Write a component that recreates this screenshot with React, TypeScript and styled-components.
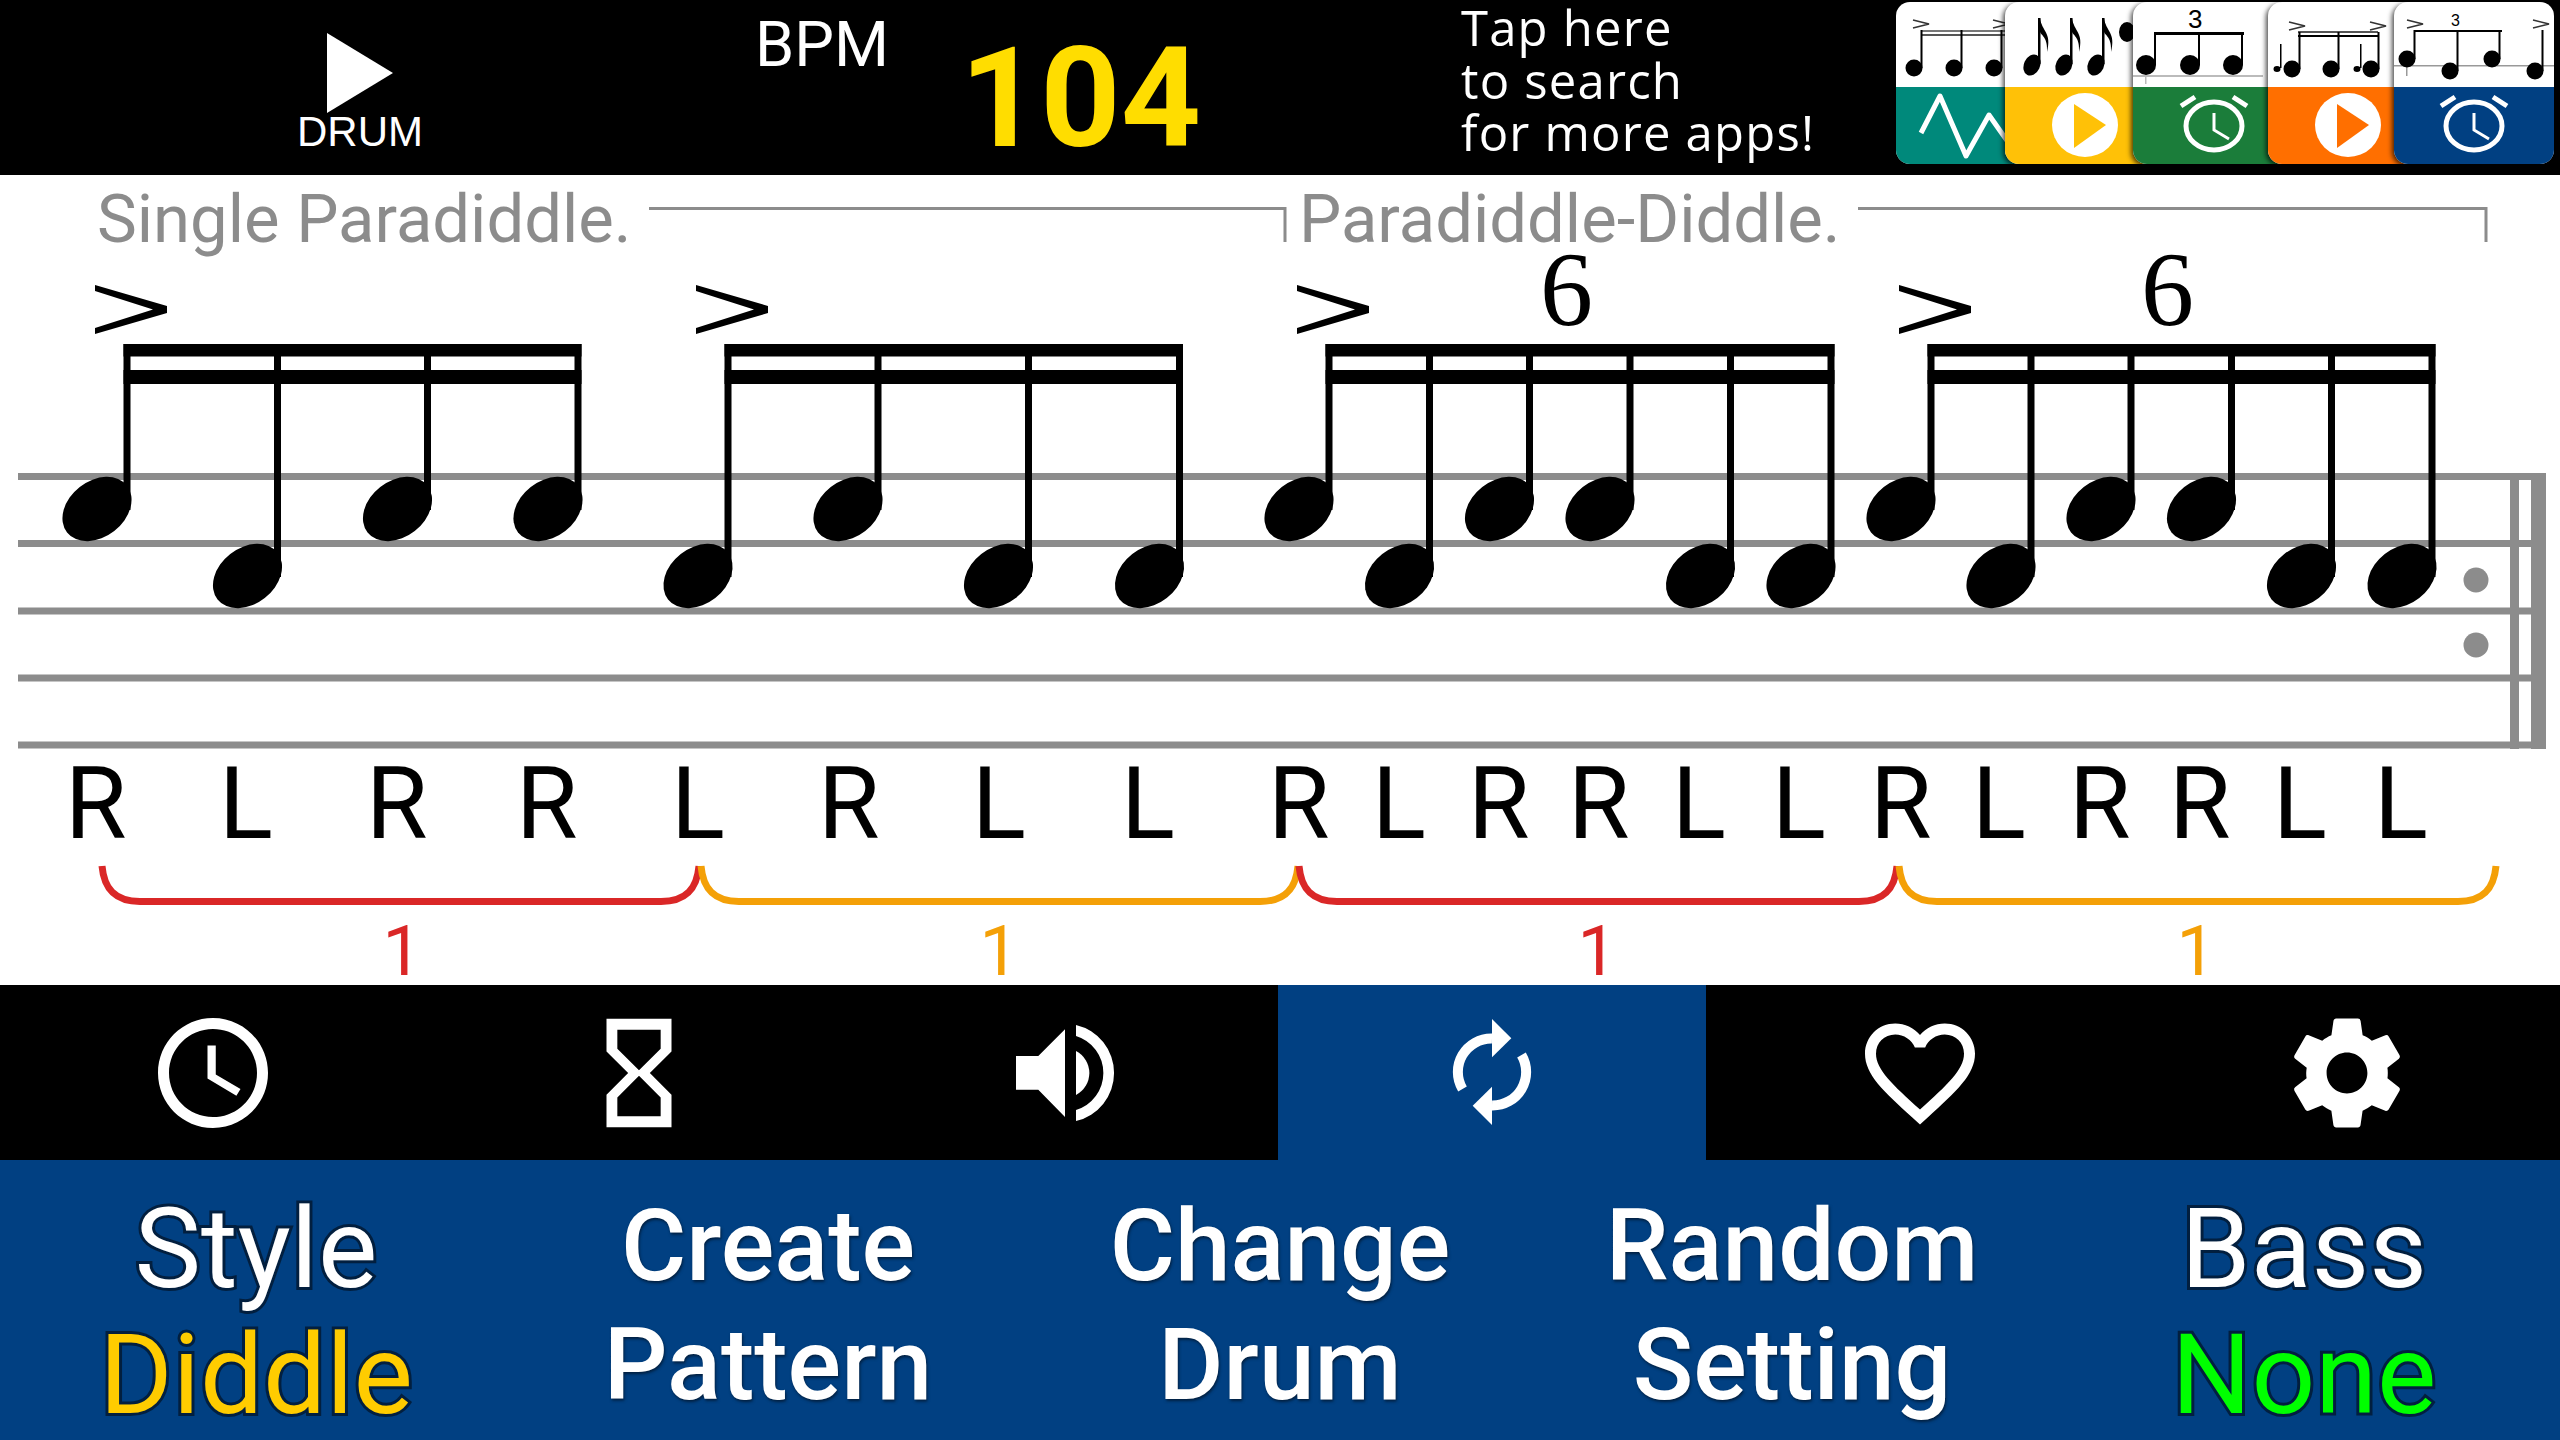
import React from 'react'
import styled, { createGlobalStyle } from 'styled-components'
import { MdAccessTime, MdFavoriteBorder, MdHourglassEmpty, MdSettings } from 'react-icons/md'

const NAVY = '#014082'
const STAFF = '#8c8c8c'
const RED = '#da2727'
const ORANGE = '#f4a007'

const STAFF_Y = [476.5, 543.5, 611, 678, 745]
const HIGH = 0
const LOW = 1

// stem x, and which staff space the head sits in
const GROUPS = [
  { stems: [127, 277.5, 427.5, 578], pitch: [HIGH, LOW, HIGH, HIGH] },
  { stems: [728, 878, 1028.5, 1179.5], pitch: [LOW, HIGH, LOW, LOW] },
  { stems: [1329, 1429.5, 1529.5, 1630, 1730.5, 1831], pitch: [HIGH, LOW, HIGH, HIGH, LOW, LOW], tuplet: 1566 },
  { stems: [1931, 2031, 2131, 2231.5, 2331.5, 2432], pitch: [HIGH, LOW, HIGH, HIGH, LOW, LOW], tuplet: 2167 },
]
const ACCENTS = [95, 696, 1297, 1899]

const STICKING: [string, number][] = [
  ['R', 65], ['L', 219], ['R', 366], ['R', 516], ['L', 671], ['R', 818], ['L', 972], ['L', 1121],
  ['R', 1268], ['L', 1372], ['R', 1468], ['R', 1568], ['L', 1672], ['L', 1772], ['R', 1870], ['L', 1972],
  ['R', 2069], ['R', 2169], ['L', 2273], ['L', 2374],
]

const BRACKETS = [
  { from: 102, to: 699, color: RED, count: 382.5 },
  { from: 701, to: 1298, color: ORANGE, count: 979.5 },
  { from: 1299, to: 1897, color: RED, count: 1577.5 },
  { from: 1899, to: 2496, color: ORANGE, count: 2176.5 },
]

const GlobalStyle = createGlobalStyle`
  html, body {
    margin: 0;
    padding: 0;
    background: #000;
  }
`

const Screen = styled.div`
  width: 2560px;
  height: 1440px;
  overflow: hidden;
  display: flex;
  flex-direction: column;
  font-family: Roboto, "Liberation Sans", sans-serif;
`

const TopBar = styled.header`
  height: 175px;
  flex: none;
  display: flex;
  background: #000;
`

const DrumButton = styled.div`
  width: 720px;
  flex: none;
  padding-top: 33px;
  display: flex;
  flex-direction: column;
  align-items: center;
  box-sizing: border-box;
`

const DrumLabel = styled.span`
  margin-top: 1px;
  font-family: "Liberation Sans", sans-serif;
  font-size: 42px;
  line-height: 36px;
  color: #fff;
`

const BpmLabel = styled.div`
  width: 205px;
  flex: none;
  margin-left: 35px;
  padding-top: 8px;
  font-size: 63px;
  line-height: 74px;
  color: #fff;
`

const BpmValue = styled.div`
  width: 501px;
  flex: none;
  padding-top: 16px;
  font-size: 140px;
  font-weight: 700;
  line-height: 164px;
  color: #ffdd00;
`

const Promo = styled.div`
  width: 435px;
  flex: none;
  padding-top: 1px;
  font-family: "Open Sans", sans-serif;
  font-size: 49px;
  font-weight: 500;
  letter-spacing: 1.2px;
  line-height: 52.5px;
  color: #fff;
`

const AppStrip = styled.div`
  display: flex;
  align-items: flex-start;
  padding-top: 2px;
`

const AppTile = styled.svg<{ $shift: number }>`
  width: 160px;
  height: 162px;
  flex: none;
  margin-left: ${p => p.$shift}px;
  border-radius: 14px;
  background: #fff;
  box-shadow: -2px 2px 5px rgba(0, 0, 0, 0.7);
`

const TileDigit = styled.text<{ $size: number }>`
  font-family: "Liberation Sans", sans-serif;
  font-size: ${p => p.$size}px;
`

const Score = styled.svg`
  display: block;
  width: 2560px;
  height: 810px;
  flex: none;
  background: #fff;
`

const PatternName = styled.text`
  font-family: Roboto, sans-serif;
  font-size: 67px;
  fill: ${STAFF};
`

const TupletDigit = styled.text`
  font-family: "Liberation Serif", serif;
  font-size: 106px;
  fill: #000;
`

const Sticking = styled.text`
  font-family: Roboto, sans-serif;
  font-size: 100px;
  fill: #000;
`

const BarCount = styled.text<{ $color: string }>`
  font-family: Roboto, sans-serif;
  font-size: 70px;
  fill: ${p => p.$color};
`

const ToolRow = styled.nav`
  height: 175px;
  flex: none;
  display: grid;
  grid-template-columns: repeat(3, 426px) 428px repeat(2, 1fr);
  background: #000;
`

const ToolCell = styled.div<{ $active?: boolean }>`
  display: flex;
  align-items: center;
  justify-content: center;
  color: #fff;
  background: ${p => (p.$active ? NAVY : '#000')};
`

const MenuRow = styled.div`
  flex: 1;
  display: grid;
  grid-template-columns: repeat(5, 1fr);
  padding-top: 26px;
  background: ${NAVY};
  text-align: center;
`

const MenuItem = styled.div`
  display: flex;
  flex-direction: column;
`

const MenuLine = styled.span`
  font-size: 100px;
  font-weight: 500;
  line-height: 119px;
  color: #fff;
  text-shadow: 1px 2px 3px #021f3f;
`

const OutlinedLine = styled.span<{ $color: string }>`
  font-size: 112px;
  line-height: 126px;
  color: ${p => p.$color};
  -webkit-text-stroke: 6px #021f3f;
  paint-order: stroke fill;
`

const Accent = ({ x, y = 285 }: { x: number; y?: number }) => (
  <polygon
    points={`${x},${y} ${x + 72},${y + 21} ${x + 72},${y + 28} ${x},${y + 49} ${x},${y + 43} ${x + 58},${y + 24.5} ${x},${y + 6}`}
    fill="#000"
  />
)

const Head = ({ stem, pitch }: { stem: number; pitch: number }) => {
  const cx = stem - 30
  const cy = pitch === HIGH ? 509 : 576
  return <ellipse cx={cx} cy={cy} rx={38} ry={28} transform={`rotate(-38 ${cx} ${cy})`} fill="#000" />
}

const Bracket = ({ from, to, color }: { from: number; to: number; color: string }) => (
  <path
    d={`M${from} 866 C${from + 2} 888 ${from + 12} 901.5 ${from + 38} 901.5 L${to - 38} 901.5 C${to - 12} 901.5 ${to - 2} 888 ${to} 866`}
    fill="none"
    stroke={color}
    strokeWidth={7}
  />
)

const ScoreSheet = () => (
  <Score viewBox="0 175 2560 810">
    <PatternName x={97} y={242}>Single Paradiddle.</PatternName>
    <PatternName x={1299} y={242}>Paradiddle-Diddle.</PatternName>
    <path d="M649 208.5H1285V242M1858 208.5H2486V242" fill="none" stroke={STAFF} strokeWidth={3} />

    {STAFF_Y.map(y => (
      <rect key={y} x={18} y={y - 3.5} width={2528} height={7} fill={STAFF} />
    ))}
    <rect x={2510} y={473} width={9} height={276} fill={STAFF} />
    <rect x={2531} y={473} width={15} height={276} fill={STAFF} />
    <ellipse cx={2476} cy={580} rx={12.5} ry={12.5} fill={STAFF} />
    <ellipse cx={2476} cy={645} rx={12.5} ry={12.5} fill={STAFF} />

    {ACCENTS.map(x => (
      <Accent key={x} x={x} />
    ))}

    {GROUPS.map(g => (
      <g key={g.stems[0]}>
        <rect x={g.stems[0] - 3.5} y={344} width={g.stems[g.stems.length - 1] - g.stems[0] + 7} height={12.5} />
        <rect x={g.stems[0] - 3.5} y={370} width={g.stems[g.stems.length - 1] - g.stems[0] + 7} height={14} />
        {g.stems.map((x, i) => (
          <g key={x}>
            <rect x={x - 3.5} y={344} width={7} height={g.pitch[i] === HIGH ? 166 : 233} />
            <Head stem={x} pitch={g.pitch[i]} />
          </g>
        ))}
        {g.tuplet && (
          <TupletDigit x={g.tuplet - 26} y={325}>6</TupletDigit>
        )}
      </g>
    ))}

    {STICKING.map(([hand, x]) => (
      <Sticking key={x} x={x} y={838}>{hand}</Sticking>
    ))}

    {BRACKETS.map(b => (
      <g key={b.from}>
        <Bracket from={b.from} to={b.to} color={b.color} />
        <BarCount x={b.count} y={975} $color={b.color}>1</BarCount>
      </g>
    ))}
  </Score>
)

// small pieces of the other apps' icons
const TileNote = ({ x, y, stem = 0, r = 8.5 }: { x: number; y: number; stem?: number; r?: number }) => (
  <g>
    <ellipse cx={x} cy={y} rx={r} ry={r} />
    {stem !== 0 && <rect x={x + r - 2} y={stem} width={2} height={y - stem} />}
  </g>
)

const TileAccent = ({ x, y }: { x: number; y: number }) => (
  <path d={`M${x} ${y}L${x + 16} ${y + 4}L${x} ${y + 8}`} fill="none" stroke="#333" strokeWidth={1.6} />
)

const TilePlay = ({ color, x }: { color: string; x: number }) => (
  <g>
    <ellipse cx={x + 33} cy={123} rx={33} ry={32} fill="#fff" />
    <polygon points={`${x + 22},102 ${x + 54},123 ${x + 22},146`} fill={color} />
  </g>
)

const TileAlarm = ({ cx }: { cx: number }) => (
  <g fill="none" stroke="#fff">
    <ellipse cx={cx} cy={124} rx={28} ry={24} strokeWidth={5} />
    <path d={`M${cx} 111V128L${cx + 15} 137`} strokeWidth={3} />
    <path d={`M${cx - 33} 104L${cx - 19} 95M${cx + 33} 104L${cx + 19} 95`} strokeWidth={5} />
  </g>
)

const Band = ({ color }: { color: string }) => <rect x={0} y={85} width={160} height={77} fill={color} />

const AppIcons = () => (
  <AppStrip>
    <AppTile $shift={0} viewBox="0 0 160 162">
      <Band color="#00897b" />
      <TileAccent x={17} y={18} />
      <TileAccent x={97} y={18} />
      <rect x={26} y={28} width={100} height={2} fill="#777" />
      <rect x={26} y={32} width={100} height={2} fill="#555" />
      <TileNote x={18} y={66} stem={28} />
      <TileNote x={58} y={66} stem={28} />
      <TileNote x={98} y={66} stem={28} />
      <path d="M25 131L44 94L70 154L93 113L112 140" fill="none" stroke="#fff" strokeWidth={5} strokeLinejoin="round" />
    </AppTile>
    <AppTile $shift={-51} viewBox="0 0 160 162">
      <Band color="#ffc107" />
      {[27, 59, 91].map(x => (
        <g key={x}>
          <ellipse cx={x} cy={63} rx={8} ry={11} transform={`rotate(25 ${x} 63)`} />
          <rect x={x + 6} y={16} width={2.5} height={46} />
          <path d={`M${x + 8} 16C${x + 10} 30 ${x + 20} 30 ${x + 15} 50C${x + 16} 36 ${x + 10} 34 ${x + 8} 30Z`} />
        </g>
      ))}
      <ellipse cx={122} cy={30} rx={8} ry={10} />
      <TilePlay color="#ffc107" x={47} />
    </AppTile>
    <AppTile $shift={-32} viewBox="0 0 160 162">
      <Band color="#1b7d3a" />
      <rect x={0} y={73} width={130} height={2} fill="#bbb" />
      <rect x={12} y={64} width={1.5} height={18} fill="#bbb" />
      <TileDigit x={55} y={26} $size={26}>3</TileDigit>
      <rect x={21} y={30} width={90} height={3} />
      <TileNote x={13} y={63} stem={30} r={10} />
      <TileNote x={57} y={63} stem={30} r={10} />
      <TileNote x={100} y={63} stem={30} r={10} />
      <TileAlarm cx={81} />
    </AppTile>
    <AppTile $shift={-25} viewBox="0 0 160 162">
      <Band color="#ff6f00" />
      <TileAccent x={21} y={20} />
      <TileAccent x={102} y={20} />
      <rect x={30} y={29} width={80} height={2} fill="#555" />
      <rect x={30} y={33} width={80} height={2} />
      <TileNote x={24} y={67} stem={30} />
      <TileNote x={63} y={67} stem={30} />
      <TileNote x={103} y={67} stem={30} />
      <ellipse cx={9} cy={67} rx={3.5} ry={3} />
      <rect x={12} y={42} width={1.5} height={24} />
      <ellipse cx={89} cy={67} rx={3.5} ry={3} />
      <rect x={92} y={42} width={1.5} height={24} />
      <TilePlay color="#ff6f00" x={47} />
    </AppTile>
    <AppTile $shift={-34} viewBox="0 0 160 162">
      <Band color={NAVY} />
      <TileAccent x={13} y={18} />
      <TileAccent x={139} y={18} />
      <TileDigit x={57} y={24} $size={16}>3</TileDigit>
      <rect x={21} y={28} width={87} height={2} />
      <rect x={0} y={63} width={160} height={1.5} fill="#999" />
      <rect x={12} y={60} width={1.5} height={14} fill="#999" />
      <TileNote x={13} y={57} stem={28} />
      <TileNote x={56} y={69} stem={28} />
      <TileNote x={98} y={57} stem={28} />
      <TileNote x={141} y={69} stem={28} />
      <TileAlarm cx={80} />
    </AppTile>
  </AppStrip>
)

const SpeakerIcon = () => (
  <svg width={127} height={124} viewBox="-14 0 127 124" fill="#fff">
    <path d="M0 45H22.3L49 18.3V106L22.3 78.7H0Z" />
    <path d="M60 40A24.8 24.8 0 0 1 60 84Z" />
    <path d="M60 14A49.3 49.3 0 0 1 60 110V99A38.7 38.7 0 0 0 60 25Z" />
  </svg>
)

const SyncIcon = () => (
  <svg width={136} height={125} viewBox="-6 0 136 125" fill="#fff">
    <path d="M32.5 79A33.5 33.5 0 0 1 62 28.5M91.5 45A33.5 33.5 0 0 1 62 95.5" fill="none" stroke="#fff" strokeWidth={10} />
    <polygon points="62,9 81.3,28.3 62,47.3" />
    <polygon points="62,76.7 42.7,95.7 62,115" />
  </svg>
)

const PlayIcon = () => (
  <svg width={66} height={80} viewBox="0 0 66 80">
    <polygon points="0,0 66,40 0,80" fill="#fff" />
  </svg>
)

export default function App() {
  return (
    <Screen>
      <GlobalStyle />
      <TopBar>
        <DrumButton>
          <PlayIcon />
          <DrumLabel>DRUM</DrumLabel>
        </DrumButton>
        <BpmLabel>BPM</BpmLabel>
        <BpmValue>104</BpmValue>
        <Promo>
          Tap here
          <br />
          to search
          <br />
          for more apps!
        </Promo>
        <AppIcons />
      </TopBar>

      <ScoreSheet />

      <ToolRow>
        <ToolCell><MdAccessTime size={132} /></ToolCell>
        <ToolCell><MdHourglassEmpty size={130} /></ToolCell>
        <ToolCell><SpeakerIcon /></ToolCell>
        <ToolCell $active><SyncIcon /></ToolCell>
        <ToolCell><MdFavoriteBorder size={132} /></ToolCell>
        <ToolCell><MdSettings size={136} /></ToolCell>
      </ToolRow>

      <MenuRow>
        <MenuItem>
          <OutlinedLine $color="#fff">Style</OutlinedLine>
          <OutlinedLine $color="#ffcc00">Diddle</OutlinedLine>
        </MenuItem>
        <MenuItem>
          <MenuLine>Create</MenuLine>
          <MenuLine>Pattern</MenuLine>
        </MenuItem>
        <MenuItem>
          <MenuLine>Change</MenuLine>
          <MenuLine>Drum</MenuLine>
        </MenuItem>
        <MenuItem>
          <MenuLine>Random</MenuLine>
          <MenuLine>Setting</MenuLine>
        </MenuItem>
        <MenuItem>
          <OutlinedLine $color="#fff">Bass</OutlinedLine>
          <OutlinedLine $color="#00ff00">None</OutlinedLine>
        </MenuItem>
      </MenuRow>
    </Screen>
  )
}
